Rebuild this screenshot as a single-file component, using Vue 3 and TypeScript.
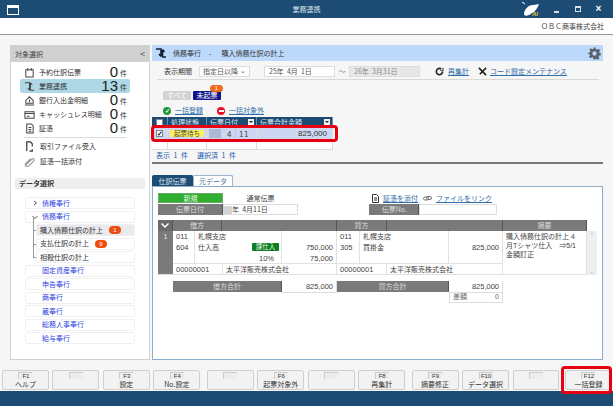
<template>
  <div class="window">
    <header class="titlebar">
      <svg class="win-icon" width="12" height="10" viewBox="0 0 12 10"><rect x=".5" y=".5" width="11" height="9" fill="none" stroke="#fff"/><rect x="1" y="1" width="10" height="2" fill="#fff"/></svg>
      <span class="title">業務連携</span>
      <svg class="ai-logo" width="20" height="16" viewBox="0 0 20 16">
        <path d="M3 13c0-4 4-9 9-9 2 0 5-1 6-1-1 3-3 6-5 8-2 1-3 2-5 3-2 1-5 1-5-1z" fill="#fff"/>
        <path d="M1 1l3 2" stroke="#fff" stroke-width="1"/>
        <text x="11" y="15" class="ai-text">AI</text>
      </svg>
      <span class="win-btn"><i class="min"></i></span>
      <span class="win-btn"><i class="max"></i></span>
      <span class="win-btn close">×</span>
    </header>
    <div class="companybar">ＯＢＣ商事株式会社</div>

    <main class="content">
      <aside class="left">
        <div class="left-head"><span>対象選択</span><span class="collapse">&lt;</span></div>
        <ul class="targets">
          <li v-for="t in targets" :key="t.label" :class="{ on: t.on }">
            <svg class="t-icon" width="11" height="11" viewBox="0 0 12 12" fill="none" stroke="#444" stroke-width="1.1"><path :d="t.icon"/></svg>
            <span class="t-label">{{ t.label }}</span>
            <span class="t-num">{{ t.count }}</span><span class="t-unit">件</span>
          </li>
        </ul>
        <div class="left-sep"></div>
        <div class="left-action">
          <svg width="11" height="11" viewBox="0 0 12 12" fill="none" stroke="#333" stroke-width="1.3"><path d="M3 11V1h4l2 2v3M9 9v2H6"/></svg>
          取引ファイル受入
        </div>
        <div class="left-action">
          <svg width="11" height="11" viewBox="0 0 12 12" fill="none" stroke="#999" stroke-width="1.2"><path d="M2 10l7-7a1.500 1.500 0 0 1 2 2l-6 6a1 1 0 0 1-3-3l5-5"/></svg>
          証憑一括添付
        </div>
        <div class="data-head">データ選択</div>
        <ul class="tree">
          <li v-for="n in tree" :key="n.label" :class="['node', { sub: n.sub, cur: n.cur, last: n.last }]">
            <svg v-if="n.arrow" class="arrow" width="6" height="6" viewBox="0 0 6 6" fill="none" stroke="#555" stroke-width="1"><path :d="n.arrow"/></svg>
            <span>{{ n.label }}</span>
            <span v-if="n.badge" class="badge">{{ n.badge }}</span>
          </li>
        </ul>
      </aside>

      <section class="right">
        <div class="right-head">
          <svg width="12" height="10" viewBox="0 0 12 10" fill="none" stroke="#123" stroke-width="1.6"><path d="M1 1h5v7M4 6l2 2.500M11 9H7.500V2M9.500 4L7.500 1.500"/></svg>
          <span class="crumb">債務奉行</span><span class="dash">-</span><span class="crumb second">購入債務仕訳の計上</span>
          <svg class="gear" width="13" height="13" viewBox="0 0 24 24"><path fill="#5b6066" d="M10 1h4l.6 3.200 2.200.9 2.700-1.900 2.800 2.800-1.900 2.700.9 2.200L23.500 11.500v4l-3.200.3-.9 2.200 1.900 2.700-2.800 2.800-2.700-1.900-2.200.9L13 23h-3l-.6-3.400-2.200-.9-2.700 1.900-2.800-2.800 1.900-2.700-.9-2.200L.5 13.500v-3l3.200-.6.9-2.200-1.900-2.700 2.800-2.800 2.700 1.900 2.200-.9zM12 8a4 4 0 1 0 0 8 4 4 0 0 0 0-8z"/></svg>
        </div>

        <div class="toolbar">
          <span class="tb-label">表示期間</span>
          <span class="select">指定日以降<i>⌄</i></span>
          <span class="date">25年&nbsp; 4月&nbsp; 1日</span>
          <span class="tilde">～</span>
          <span class="date off">26年&nbsp; 3月31日</span>
          <svg class="tb-icon" width="9" height="9" viewBox="0 0 10 10" fill="none" stroke="#222" stroke-width="1.800"><path d="M8.500 5a3.500 3.500 0 1 1-1.500-2.800"/><path d="M9 1v3H6" stroke-width="1"/></svg>
          <a class="link">再集計</a>
          <svg class="tb-icon second" width="9" height="9" viewBox="0 0 10 10" stroke="#222" stroke-width="1.800"><path d="M1 1l8 8M9 1L2 8"/></svg>
          <a class="link">コード設定メンテナンス</a>
        </div>

        <div class="filters">
          <span class="chip all">すべて</span>
          <span class="chip pending">未起票<em>1</em></span>
        </div>

        <div class="bulk">
          <span class="dot ok">✓</span><a class="link">一括登録</a>
          <span class="dot no"></span><a class="link">一括対象外</a>
        </div>

        <div class="list">
          <div class="l-row l-head">
            <span class="c1"><i class="box"></i></span>
            <span class="c2">処理状態</span>
            <span class="c3">伝票日付<i class="drop"></i></span>
            <span class="c4">伝票合計金額<i class="drop"></i></span>
          </div>
          <div class="l-row l-sel">
            <span class="c1"><i class="box check">✓</i></span>
            <span class="c2"><b class="status">起票待ち</b></span>
            <span class="c3"><i class="era"></i><span class="md">4</span><span class="md">11</span></span>
            <span class="c4 num">825,000</span>
          </div>
          <div class="l-row l-empty"><span class="c1"></span><span class="c2"></span><span class="c3"></span><span class="c4"></span></div>
        </div>
        <div class="counts"><span>表示 1 件</span><span>選択済 1 件</span></div>
        <div class="thick"></div>

        <div class="tabs">
          <span class="tab active">仕訳伝票</span>
          <span class="tab">元データ</span>
        </div>
        <div class="tabpanel">
          <div class="slip-top">
            <div class="slip-left">
              <span class="new">新規</span>
              <span class="gray-label">伝票日付</span>
            </div>
            <div class="slip-mid">
              <span class="kind">通常伝票</span>
              <span class="slip-date"><i class="era big"></i>年&nbsp; 4月11日</span>
            </div>
            <div class="slip-right">
              <div class="attach">
                <svg width="7" height="9" viewBox="0 0 7 9" fill="none" stroke="#333"><path d="M.5.500h4l2 2v6h-6zM2 4h3M2 6h3"/></svg>
                <a class="link">証憑を添付</a>
                <svg class="clip" width="9" height="5" viewBox="0 0 9 5" fill="none" stroke="#777"><rect x=".5" y="1" width="5" height="3" rx="1.500"/><rect x="3.500" y=".5" width="5" height="3" rx="1.500"/></svg>
                <a class="link">ファイルをリンク</a>
              </div>
              <div class="slip-no"><span class="gray-label no">伝票No.</span><span class="no-input"></span></div>
            </div>
          </div>

          <div class="grid-wrap">
            <div class="journal">
              <span class="jh chev"><svg width="8" height="5" viewBox="0 0 8 5" fill="none" stroke="#fff" stroke-width="1.500"><path d="M.5.500L4 4 7.500.5"/></svg></span>
              <span class="jh a">借方</span><span class="jh b"></span>
              <span class="jh c">貸方</span><span class="jh d"></span>
              <span class="jh e">摘要</span>

              <span class="rownum">1</span>
              <div class="cell code">011<br>604</div>
              <div class="cell name">
                札幌支店
                <div class="with-tag">仕入高<b class="tag">課仕入</b></div>
                <div class="rate">10%</div>
              </div>
              <div class="cell amount"><br>750,000<br>75,000</div>
              <div class="cell code">011<br>305</div>
              <div class="cell name">札幌支店<br>買掛金</div>
              <div class="cell amount"><br>825,000</div>
              <div class="cell memo">購入債務仕訳の計上 4<br>月Tシャツ仕入　⇒5/1<br>金額訂正</div>
              <div class="cell partner-d"><span class="pcode">00000001</span><span>太平洋販売株式会社</span></div>
              <div class="cell partner-c"><span class="pcode">00000001</span><span>太平洋販売株式会社</span></div>
            </div>
            <div class="scroll"><span>⌃</span><span>⌄</span></div>
          </div>

          <div class="totals">
            <span class="gray-label t1">借方合計</span><span class="tval">825,000</span>
            <span class="gray-label t2">貸方合計</span><span class="tval">825,000</span>
          </div>
          <div class="diff"><span>差額</span><span>0</span></div>
        </div>
      </section>
    </main>

    <footer class="fkeys">
      <div v-for="k in keys" :key="k.no" class="fkey" :class="{ gap: k.gap, 'gap-last': k.no === 11 }">
        <span class="fno">{{ k.name }}</span>
        <span class="flabel">{{ k.label }}</span>
      </div>
    </footer>
    <div class="statusbar"></div>

    <div class="red row-mark"></div>
    <div class="red key-mark"></div>
  </div>
</template>

<script setup lang="ts">
interface Target {
  label: string;
  count: number;
  icon: string;
  on?: boolean;
}

interface TreeNode {
  label: string;
  arrow?: string;
  sub?: boolean;
  cur?: boolean;
  last?: boolean;
  badge?: number;
}

const targets: Target[] = [
  { label: '予約仕訳伝票', count: 0, icon: 'M2 3h8v8H2zM4 1v3M8 1v3' },
  { label: '業務連携', count: 13, on: true, icon: 'M1 2h5v8M4 8l2 2M11 10H7V2M9 4L7 2' },
  { label: '銀行入出金明細', count: 0, icon: 'M1 11h10M2 9h8V6L6 2 2 6zM6 5v3' },
  { label: 'キャッシュレス明細', count: 0, icon: 'M1 3h10v7H1zM1 5h10M3 8h3' },
  { label: '証憑', count: 0, icon: 'M3 1h5l2 2v8H3zM5 5h3M5 7h3M5 9h3' },
];

const tree: TreeNode[] = [
  { label: '債権奉行', arrow: 'M2 1l2.500 2L2 5' },
  { label: '債務奉行', arrow: 'M.5 2l2.500 2.500L5.500 2' },
  { label: '購入債務仕訳の計上', sub: true, cur: true, badge: 1 },
  { label: '支払仕訳の計上', sub: true, badge: 9 },
  { label: '相殺仕訳の計上', sub: true, last: true },
  { label: '固定資産奉行' },
  { label: '申告奉行' },
  { label: '商奉行' },
  { label: '蔵奉行' },
  { label: '総務人事奉行' },
  { label: '給与奉行' },
];

const labels: [string, boolean?][] = [
  ['ヘルプ'], [''], ['設定'], ['No.設定'],
  ['', true], ['起票対象外'], [''], ['再集計'],
  ['摘要修正', true], ['データ選択'], [''], ['一括登録'],
];

const names = ['F1', '', 'F3', 'F4', '', 'F6', '', 'F8', 'F9', 'F10', '', 'F12'];

const keys = labels.map(([label, gap], i) => ({ no: i, name: names[i], label, gap: !!gap }));
</script>

<style>
html, body {
  margin: 0;
  overflow: hidden;
}
</style>

<style scoped>
* {
  box-sizing: border-box;
}

.window {
  position: relative;
  width: 613px;
  height: 406px;
  display: flex;
  flex-direction: column;
  overflow: hidden;
  background: #f6f6f6;
  color: #333;
  font: 7px/1.2 "Noto Sans CJK JP", "Liberation Sans", sans-serif;
}

.titlebar {
  position: relative;
  height: 18px;
  flex: none;
  display: flex;
  align-items: center;
  justify-content: flex-end;
  padding: 0 4px 0 0;
  background: #1c4b74;
  color: #fff;
}

.win-icon {
  position: absolute;
  left: 7px;
  top: 5px;
}

.title {
  position: absolute;
  left: 0;
  right: 0;
  text-align: center;
  font-size: 7px;
  color: #d8e4ee;
}

.ai-logo {
  margin-right: 5px;
}

.ai-text {
  font: italic bold 6px "Liberation Sans", sans-serif;
  fill: #e8c23a;
}

.win-btn {
  position: relative;
  width: 21px;
  text-align: center;
  font: bold 10px/10px "Liberation Sans", sans-serif;
}

.win-btn i {
  display: inline-block;
}

.win-btn .min {
  width: 5px;
  height: 2px;
  background: #ddd;
  vertical-align: -1px;
}

.win-btn .max {
  width: 6px;
  height: 6px;
  border: 1px solid #ddd;
  border-top-width: 2px;
}

.companybar {
  height: 17px;
  flex: none;
  background: #fff;
  border-bottom: 1px solid #999;
  padding-right: 9px;
  text-align: right;
  line-height: 16px;
  color: #444;
}

.content {
  flex: 1;
  display: flex;
  min-height: 0;
  padding: 10px 10px 0 10px;
  gap: 2px;
}

.left {
  width: 140px;
  height: 315px;
  flex: none;
  background: #fff;
  border: 1px solid #d2d2d2;
}

.left-head {
  height: 16px;
  display: flex;
  justify-content: space-between;
  align-items: center;
  padding: 0 4px;
  background: #d0d0d0;
  color: #444;
}

.collapse {
  font-size: 9px;
  color: #555;
}

.targets {
  list-style: none;
  margin: 3px 0 0;
  padding: 0 19px 0 9px;
}

.targets li {
  height: 14px;
  display: flex;
  align-items: center;
  padding: 0 2px 0 4px;
}

.targets li.on {
  background: #aed8e6;
  border-radius: 2px;
}

.t-icon {
  margin-right: 4px;
  flex: none;
}

.t-label {
  flex: 1;
  white-space: nowrap;
}

.t-num {
  font: 15px/14px "Liberation Sans", sans-serif;
  color: #222;
}

.t-unit {
  margin: 3px 0 0 2px;
  width: 8px;
}

.left-sep {
  height: 1px;
  margin: 2px 23px 0 13px;
  background: #ddd;
}

.left-action {
  height: 14px;
  margin-left: 13px;
  display: flex;
  align-items: center;
  gap: 5px;
  margin-top: 1px;
}

.data-head {
  margin: 10px 4px 0;
  height: 11px;
  padding-left: 4px;
  background: #eeeeee;
  font-weight: 700;
  line-height: 11px;
  color: #333;
}

.tree {
  list-style: none;
  margin: 8px 14px 0;
  padding: 0;
}

.node {
  position: relative;
  height: 12px;
  margin-bottom: 1.5px;
  display: flex;
  align-items: center;
  padding-left: 16px;
  border: 1px solid #f0f0f0;
  border-radius: 2px;
  color: #2f3fe0;
  white-space: nowrap;
}

.arrow {
  position: absolute;
  left: 6px;
  top: 2px;
}

.node.sub {
  margin-left: 11px;
  padding-left: 3px;
  color: #333;
}

.node.sub::before {
  content: "";
  position: absolute;
  left: -4px;
  top: 5px;
  width: 3px;
  height: 1px;
  background: #999;
}

.node.sub::after {
  content: "";
  position: absolute;
  left: -4px;
  top: -8px;
  width: 1px;
  height: 14px;
  background: #999;
}

.node.cur {
  background: #e9e9ee;
}

.badge {
  width: 12px;
  height: 8px;
  margin-left: 6px;
  border-radius: 4px;
  background: #ee4e0c;
  color: #fff;
  text-align: center;
  font: 6px/8px "Liberation Sans", sans-serif;
}

.right {
  flex: 1;
  min-width: 0;
  position: relative;
}

.right-head {
  height: 16px;
  display: flex;
  align-items: center;
  padding: 0 2px 0 3px;
  background: #bcd8fb;
  color: #333;
}

.crumb {
  margin-left: 6px;
}

.dash {
  margin: 0 0 0 8px;
}

.crumb.second {
  margin-left: 10px;
}

.gear {
  margin-left: auto;
}

.toolbar {
  height: 19px;
  margin: 0 4px 0 5px;
  padding: 2px 0 0 7px;
  display: flex;
  align-items: center;
  border-bottom: 1px solid #d8d8d8;
}

.tb-label {
  width: 35px;
}

.select,
.date {
  height: 11px;
  background: #fff;
  border: 1px solid #ddd;
  line-height: 9px;
  color: #555;
}

.select {
  position: relative;
  width: 51px;
  padding-left: 3px;
  margin-right: 14px;
}

.select i {
  position: absolute;
  right: 3px;
  top: -1px;
  font-style: normal;
}

.date {
  width: 71px;
  padding-left: 4px;
}

.date.off {
  background: #e7e7e7;
  color: #888;
}

.tilde {
  width: 14px;
  text-align: center;
  color: #777;
}

.tb-icon {
  margin: 0 4px 0 15px;
}

.tb-icon.second {
  margin: 0 3px 0 9px;
}

.link {
  color: #2f6ca8;
  text-decoration: underline;
  white-space: nowrap;
}

.filters {
  height: 9px;
  margin: 11px 0 0 11px;
  display: flex;
  gap: 2px;
}

.chip {
  position: relative;
  width: 28px;
  height: 9px;
  text-align: center;
  border-radius: 1px;
  line-height: 9px;
  color: #fff;
}

.chip.all {
  background: #d2d2d2;
}

.chip.pending {
  background: #14148a;
}

.chip em {
  position: absolute;
  top: -6px;
  right: -2px;
  width: 13px;
  height: 7px;
  border-radius: 4px;
  background: #ee6a1c;
  font: 6px/7px "Liberation Sans", sans-serif;
}

.bulk {
  height: 9px;
  margin: 6px 0 0 11px;
  display: flex;
  align-items: center;
}

.dot {
  width: 8px;
  height: 8px;
  border-radius: 50%;
  margin-right: 4px;
  color: #fff;
  font: bold 6px/8px "Liberation Sans", sans-serif;
  text-align: center;
}

.dot.ok {
  background: #1d9a36;
}

.dot.no {
  position: relative;
  margin-left: 14px;
  background: #e8101e;
}

.dot.no::after {
  content: "";
  position: absolute;
  left: 1.5px;
  top: 3px;
  width: 5px;
  height: 2px;
  background: #fff;
}

.list {
  width: 181px;
  margin-top: 2px;
  background: #fff;
  border-right: 1px solid #ddd;
}

.l-row {
  display: grid;
  grid-template-columns: 16px 39px 50px 76px;
}

.l-row > span {
  display: flex;
  align-items: center;
  border-right: 1px solid #dcdcdc;
  border-bottom: 1px solid #dcdcdc;
}

.l-head {
  height: 10px;
  background: #1c4b74;
  color: #dfe8f0;
}

.l-head > span {
  padding-left: 3px;
  border-right-color: #6f8ea9;
  border-bottom: 0;
}

.l-sel {
  height: 14px;
  background: #cdd7f1;
}

.l-empty {
  height: 9px;
}

.c1 {
  justify-content: center;
  padding-left: 0 !important;
}

.box {
  width: 7px;
  height: 7px;
  background: #fff;
  border: 1px solid #888;
  font: bold 7px/5px "Liberation Sans", sans-serif;
  font-style: normal;
  color: #222;
  text-align: center;
}

.box.check {
  background: #f4f4f4;
}

.drop {
  position: relative;
  width: 6px;
  height: 6px;
  margin-left: auto;
  margin-right: 2px;
  background: #f2f2f2;
}

.drop::after {
  content: "";
  position: absolute;
  left: 1px;
  top: 2px;
  border: 2px solid transparent;
  border-top-color: #222;
}

.status {
  width: 34px;
  height: 7px;
  margin: 0 auto;
  background: #fdf05c;
  border-radius: 1px;
  font-weight: 400;
  font-size: 6.5px;
  line-height: 7px;
  text-align: center;
  color: #444;
}

.era {
  display: block;
  width: 12px;
  height: 9px;
  margin-left: 2px;
  background: #aeb8d4;
}

.md {
  margin-left: 6px;
  font-size: 8px;
  letter-spacing: .5px;
  color: #444;
}

.md + .md {
  margin-left: 3px;
  padding-left: 3px;
  border-left: 1px solid #bbc4de;
}

.num {
  justify-content: flex-end;
  padding-right: 5px;
  font: 8px "Liberation Sans", sans-serif;
  color: #333;
}

.counts {
  margin: 0 0 0 4px;
  display: flex;
  gap: 9px;
  height: 10px;
  color: #1f5fae;
  font-size: 7px;
  line-height: 10px;
  word-spacing: 2px;
}

.thick {
  height: 2px;
  margin: 2px 0 0;
  width: 451px;
  background: #777;
}

.tabs {
  margin-top: 11px;
  height: 11px;
  display: flex;
}

.tab {
  width: 40px;
  border: 1px solid #9bb6d0;
  border-bottom: 0;
  border-radius: 2px 2px 0 0;
  background: #fff;
  text-align: center;
  line-height: 10px;
  color: #4a7297;
}

.tab.active {
  width: 41px;
  background: #1c4b74;
  border-color: #1c4b74;
  color: #dfe8f0;
}

.tabpanel {
  width: 451px;
  height: 174px;
  padding: 6px 0 0 5px;
  background: #fff;
  border: 1px solid #8caccb;
}

.slip-top {
  display: flex;
  height: 22px;
}

.slip-left {
  width: 65px;
  display: flex;
  flex-direction: column;
  gap: 1px;
}

.new {
  height: 10px;
  background: #2fae2f;
  border: 1px solid #6aa86a;
  color: #e8f6e8;
  text-align: center;
  line-height: 9px;
}

.gray-label {
  height: 11px;
  background: #7a7a7a;
  border-right: 1px solid #555;
  color: #dcdcdc;
  text-align: center;
  line-height: 11px;
}

.slip-mid {
  width: 75px;
  display: flex;
  flex-direction: column;
  gap: 1px;
}

.kind {
  height: 10px;
  text-align: center;
  line-height: 10px;
  color: #444;
}

.slip-date {
  height: 11px;
  display: flex;
  align-items: center;
  border: 1px solid #ddd;
  color: #444;
}

.era.big {
  width: 8px;
  height: 8px;
  margin: 0;
  background: #d4d4d4;
}

.slip-right {
  margin-left: 71px;
  display: flex;
  flex-direction: column;
  gap: 1px;
}

.attach {
  height: 10px;
  display: flex;
  align-items: center;
  gap: 4px;
  margin-left: 3px;
}

.clip {
  margin-left: 1px;
}

.slip-no {
  display: flex;
  height: 11px;
}

.gray-label.no {
  width: 50px;
  text-align: right;
  padding-right: 11px;
}

.no-input {
  width: 78px;
  border: 1px solid #ddd;
}

.grid-wrap {
  margin-top: 5px;
  display: flex;
  width: 439px;
}

.journal {
  width: 429px;
  display: grid;
  grid-template-columns: 15px 22px 87px 55px 23px 89px 54px 84px;
  grid-template-rows: 11px 33px 11px;
  background: #fff;
  font: 7px/11px "Liberation Sans", "Noto Sans CJK JP", sans-serif;
  color: #444;
}

.jh {
  background: #7a7a7a;
  border-right: 1px solid #555;
  color: #dcdcdc;
  text-align: center;
  line-height: 11px;
}

.chev {
  background: #6a6a6a;
}

.jh.a { grid-column: 2 / 3; width: 49px; }
.jh.b { grid-column: 3 / 5; margin-left: 27px; }
.jh.c { grid-column: 5 / 6; width: 50px; z-index: 1; }
.jh.d { grid-column: 6 / 8; margin-left: 27px; }
.jh.e { grid-column: 8 / 9; }

.rownum {
  grid-row: 2 / 4;
  background: #7a7a7a;
  color: #e6e6e6;
  text-align: center;
  line-height: 11px;
  border-bottom: 1px solid #ddd;
}

.cell {
  padding-left: 3px;
  border-right: 1px solid #e2e2e2;
  border-bottom: 1px solid #e2e2e2;
  white-space: nowrap;
}

.code,
.amount,
.pcode {
  font-size: 7.5px;
}

.amount {
  text-align: right;
  padding: 0 3px 0 0;
}

.with-tag {
  display: flex;
  justify-content: space-between;
  padding-right: 2px;
}

.tag {
  width: 27px;
  height: 8px;
  margin-top: 1px;
  background: #0d7d1f;
  border-radius: 1px;
  color: #e4f2e4;
  text-align: center;
  font-weight: 400;
  font-size: 6.5px;
  line-height: 8px;
}

.rate {
  text-align: right;
  padding-right: 7px;
  font-size: 7.5px;
}

.memo {
  grid-column: 8;
  grid-row: 2 / 4;
  line-height: 9px;
  padding-top: 1px;
}

.partner-d,
.partner-c {
  display: flex;
  padding-left: 3px;
}

.partner-d { grid-column: 2 / 5; grid-row: 3; }
.partner-c { grid-column: 5 / 8; grid-row: 3; }

.pcode {
  width: 47px;
  margin-right: 3px;
  border-right: 1px solid #e2e2e2;
}

.scroll {
  width: 10px;
  height: 44px;
  margin-top: 11px;
  display: flex;
  flex-direction: column;
  justify-content: space-between;
  background: #efefef;
  color: #bbb;
  text-align: center;
}

.totals {
  display: grid;
  grid-template-columns: 109px 55px 112px 54px;
  margin: 6px 0 0 15px;
  height: 11px;
}

.tval {
  text-align: right;
  padding-right: 3px;
  border-right: 1px solid #ddd;
  border-bottom: 1px solid #ddd;
  font: 7.5px/11px "Liberation Sans", sans-serif;
  color: #444;
}

.diff {
  width: 54px;
  height: 11px;
  margin: 0 0 0 291px;
  padding: 0 3px;
  display: flex;
  justify-content: space-between;
  border: 1px solid #ddd;
  border-top: 0;
  font: 7px/10px "Liberation Sans", "Noto Sans CJK JP", sans-serif;
  color: #666;
}

.fkeys {
  height: 21px;
  flex: none;
  display: flex;
  gap: 3.5px;
  padding: 0 1px 0 2px;
}

.fkey {
  width: 47px;
  height: 20px;
  background: #f2f2f2;
  border: 1px solid #cfcfcf;
  border-radius: 2px;
  text-align: center;
  color: #333;
}

.fkey.gap {
  margin-left: 3px;
}

.fkey.gap-last {
  margin-left: 2px;
}

.fno {
  display: block;
  width: 14px;
  height: 7px;
  margin: 1px auto 0;
  border-top: 1px solid #ccc;
  border-left: 1px solid #ccc;
  font: 6px/6px "Liberation Sans", sans-serif;
  background: #ededed;
}

.flabel {
  display: block;
  line-height: 10px;
}

.statusbar {
  flex: none;
  height: 15px;
  background: #1c4b74;
}

.red {
  position: absolute;
  border: 3px solid #e60012;
  border-radius: 4px;
  pointer-events: none;
}

.row-mark {
  left: 151px;
  top: 125px;
  width: 187px;
  height: 17px;
}

.key-mark {
  left: 561px;
  top: 366px;
  width: 51px;
  height: 28px;
}
</style>
